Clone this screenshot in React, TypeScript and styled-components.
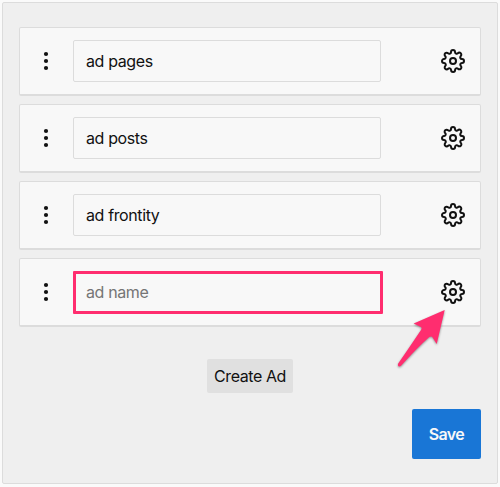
import React from "react";
import styled, { createGlobalStyle } from "styled-components";
import { FiSettings } from "react-icons/fi";

const GlobalStyle = createGlobalStyle`
  *, *::before, *::after { box-sizing: border-box; }
  body {
    margin: 0;
    background: #fafafa;
    font-family: Inter, "Liberation Sans", sans-serif;
    font-size: 16px;
    color: #111;
  }
`;

const Page = styled.main`
  height: 487px;
  padding: 2px 2px 3px;
  overflow: hidden;
`;

const Panel = styled.section`
  display: flex;
  flex-direction: column;
  height: 482px;
  padding: 24px 16px 0;
  background: #efefef;
  border: 1px solid #dcdcdc;
  border-radius: 2px;
`;

const List = styled.ul`
  display: grid;
  gap: 8px;
  margin: 0;
  padding: 0;
  list-style: none;
`;

const Row = styled.li`
  display: flex;
  align-items: center;
  height: 69px;
  padding: 0 15px 0 14px;
  background: #f8f8f8;
  border: 1px solid #dcdcdc;
  border-bottom-width: 2px;
  border-radius: 2px;
`;

const Handle = styled.span`
  display: flex;
  width: 24px;
  margin-right: 15px;
`;

const Field = styled.div`
  position: relative;
  width: 308px;
`;

const NameInput = styled.input`
  display: block;
  width: 100%;
  height: 42px;
  padding: 0 12px;
  border: 1px solid #dcdcdc;
  border-radius: 2px;
  background: #f8f8f8;
  color: #111;
  font: inherit;
  letter-spacing: -0.38px;
  outline: none;
  &::placeholder { color: #757575; opacity: 1; }
`;

const Highlight = styled.span`
  position: absolute;
  inset: 0 -2px -1px 0;
  border: 3px solid #ff2d6f;
  border-radius: 1px;
  pointer-events: none;
`;

const SettingsButton = styled.button`
  position: relative;
  display: flex;
  margin: 0 0 0 auto;
  padding: 0;
  border: 0;
  background: none;
  color: #111;
`;

const Pointer = styled.svg`
  position: absolute;
  left: -47px;
  top: 26px;
  overflow: visible;
  filter: drop-shadow(0 1px 1px rgba(0, 0, 0, 0.4));
  pointer-events: none;
`;

const CreateButton = styled.button`
  align-self: center;
  width: 86px;
  height: 34px;
  margin: 32px 0 0 0;
  padding: 0;
  border: 0;
  border-radius: 2px;
  background: #e0e0e0;
  color: #111;
  font: inherit;
  letter-spacing: -0.42px;
`;

const SaveButton = styled.button`
  align-self: flex-end;
  width: 69px;
  height: 50px;
  margin-top: 16px;
  padding: 0;
  border: 0;
  border-radius: 2px;
  background: #1976d6;
  color: #f8f8f8;
  font: inherit;
  font-weight: 600;
  letter-spacing: -0.65px;
`;

const ads = [
  { id: 1, name: "ad pages" },
  { id: 2, name: "ad posts" },
  { id: 3, name: "ad frontity" },
  { id: 4, name: "", highlighted: true },
];

const DragDots = () => (
  <svg width="24" height="24" viewBox="0 0 24 24" fill="#111">
    <circle cx="12" cy="5" r="2.1" />
    <circle cx="12" cy="12" r="2.1" />
    <circle cx="12" cy="19" r="2.1" />
  </svg>
);

export default function App() {
  return (
    <>
      <GlobalStyle />
      <Page>
        <Panel>
          <List>
            {ads.map((ad) => (
              <Row key={ad.id}>
                <Handle><DragDots /></Handle>
                <Field>
                  <NameInput defaultValue={ad.name} placeholder="ad name" />
                  {ad.highlighted && <Highlight />}
                </Field>
                <SettingsButton aria-label="Settings">
                  <FiSettings size={24} />
                  {ad.highlighted && (
                    <Pointer width="54" height="64" viewBox="394 306 54 64">
                      <path
                        d="M444.7 310 L413.7 323.6 L420.8 327 Q422.3 328 421 330 Q413 342 398.2 363.6 Q397 367.4 400.8 366 Q417 348 429.3 337 Q431.6 335.8 432.6 337.4 L436.7 344 Z"
                        fill="#ff2d6f"
                      />
                    </Pointer>
                  )}
                </SettingsButton>
              </Row>
            ))}
          </List>
          <CreateButton>Create Ad</CreateButton>
          <SaveButton>Save</SaveButton>
        </Panel>
      </Page>
    </>
  );
}
